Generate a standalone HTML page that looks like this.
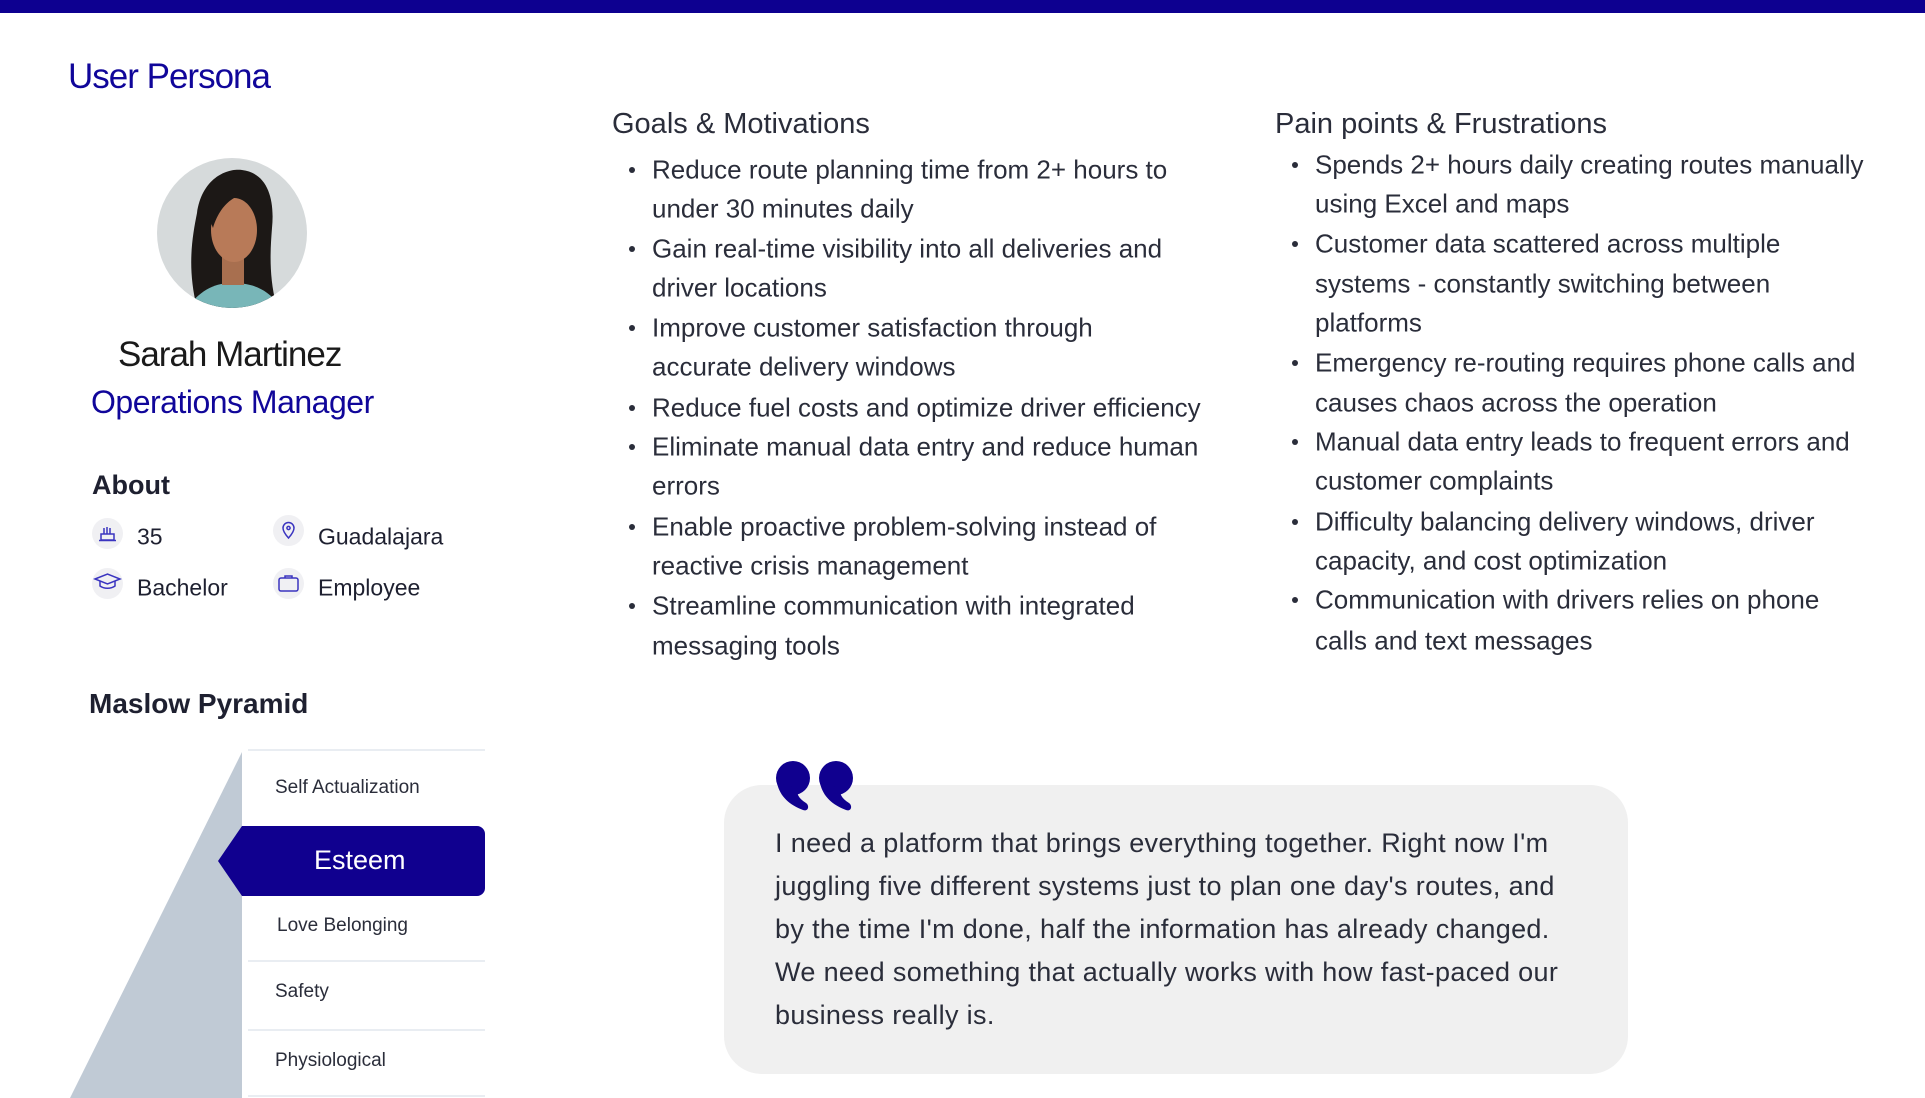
<!DOCTYPE html>
<html><head><meta charset="utf-8"><style>
*{margin:0;padding:0;box-sizing:border-box}
body{width:1925px;height:1098px;overflow:hidden;background:#fff;font-family:"Liberation Sans",sans-serif;position:relative;color:#2a2d3a}
.a{position:absolute;white-space:nowrap}
.ln{position:absolute;white-space:nowrap;font-size:26px;color:#2a2d3a;transform:translateY(-50%)}
.bu{position:absolute;width:6px;height:6px;border-radius:50%;background:#2a2d3a;transform:translateY(-50%)}
.ic{position:absolute;width:31px;height:31px;border-radius:50%;background:#f0f0f3}
.hr{position:absolute;left:248px;width:237px;height:2px;background:#e9edf2}
.it{position:absolute;white-space:nowrap;font-size:23px;color:#1e2030;transform:translateY(-50%)}
.pl{position:absolute;white-space:nowrap;font-size:19px;color:#2a2d3a;transform:translateY(-50%)}
</style></head><body>
<div class="a" style="left:0;top:0;width:1925px;height:13px;background:#0d0090"></div>
<div class="a" style="left:68px;top:57px;font-size:35px;color:#10069a;letter-spacing:-1px">User Persona</div>

<svg class="a" style="left:157px;top:158px" width="150" height="150" viewBox="0 0 150 150">
<defs><clipPath id="c"><circle cx="75" cy="75" r="75"/></clipPath></defs>
<g clip-path="url(#c)">
<rect width="150" height="150" fill="#d6dadb"/>
<path d="M40 150 C30 110 35 80 40 55 C45 20 70 10 85 12 C110 15 118 40 115 70 C113 95 112 120 120 150Z" fill="#1c1816"/>
<path d="M30 150 C45 130 60 125 75 125 C95 125 110 130 125 150Z" fill="#78b6b8"/>
<rect x="65" y="95" width="22" height="32" fill="#a86f4f"/>
<ellipse cx="77" cy="72" rx="23" ry="32" fill="#b87a58"/>
<path d="M52 60 C55 30 75 25 95 35 C85 35 65 40 56 70Z" fill="#1c1816"/>
</g></svg>

<div class="a" style="left:118px;top:335px;font-size:35px;color:#1a1a1a;letter-spacing:-1px">Sarah Martinez</div>
<div class="a" style="left:91px;top:384px;font-size:32px;color:#10069a;letter-spacing:-0.5px">Operations Manager</div>

<div class="a" style="left:92px;top:470px;font-size:27px;font-weight:bold;color:#1e2030">About</div>
<div class="ic" style="left:92px;top:518px"></div>
<div class="ic" style="left:273px;top:515px"></div>
<div class="ic" style="left:92px;top:568px"></div>
<div class="ic" style="left:273px;top:568px"></div>
<svg class="a" style="left:92px;top:518px" width="31" height="31"><g fill="none" stroke="#3a34c0" stroke-width="1.5"><rect x="9" y="16" width="13" height="6"/><line x1="7" y1="22.5" x2="24" y2="22.5"/><path d="M12 16V10M15 16V9M18 16V10"/></g></svg>
<svg class="a" style="left:273px;top:515px" width="31" height="31"><g fill="none" stroke="#3a34c0" stroke-width="1.5"><path d="M15.5 23C11 18 10 15 10 13a5.5 5.5 0 0 1 11 0c0 2-1 5-5.5 10z"/><circle cx="15.5" cy="13" r="1.6"/></g></svg>
<svg class="a" style="left:92px;top:568px" width="31" height="31"><g fill="none" stroke="#3a34c0" stroke-width="1.5"><path d="M3 11L15.5 6 28 11 15.5 16z"/><path d="M8 13v5c4 3 11 3 15 0v-5"/></g></svg>
<svg class="a" style="left:273px;top:568px" width="31" height="31"><g fill="none" stroke="#3a34c0" stroke-width="1.5"><rect x="6" y="10" width="19" height="13" rx="2"/><path d="M12 10V8h7v2"/></g></svg>
<div class="it" style="left:137px;top:537px">35</div>
<div class="it" style="left:318px;top:537px">Guadalajara</div>
<div class="it" style="left:137px;top:588px">Bachelor</div>
<div class="it" style="left:318px;top:588px">Employee</div>

<div class="a" style="left:89px;top:688px;font-size:28px;font-weight:bold;color:#1e2030">Maslow Pyramid</div>
<svg class="a" style="left:0;top:740px" width="500" height="358"><polygon points="242,12 242,358 70,358" fill="#c0cad5"/><path d="M242 86 H477 a8 8 0 0 1 8 8 V148 a8 8 0 0 1 -8 8 H242 L218 121Z" fill="#10008f"/></svg>
<div class="hr" style="top:749px"></div>
<div class="hr" style="top:960px"></div>
<div class="hr" style="top:1029px"></div>
<div class="hr" style="top:1095px"></div>
<div class="pl" style="left:275px;top:788px">Self Actualization</div>
<div class="a" style="left:314px;top:845px;font-size:27px;color:#fff">Esteem</div>
<div class="pl" style="left:277px;top:926px">Love Belonging</div>
<div class="pl" style="left:275px;top:992px">Safety</div>
<div class="pl" style="left:275px;top:1061px">Physiological</div>

<div class="a" style="left:612px;top:108px;font-size:29px;color:#2a2d3a">Goals &amp; Motivations</div>
<div class="bu" style="left:629px;top:170px"></div>
<div class="ln" style="left:652px;top:170px">Reduce route planning time from 2+ hours to</div>
<div class="ln" style="left:652px;top:209px">under 30 minutes daily</div>
<div class="bu" style="left:629px;top:249px"></div>
<div class="ln" style="left:652px;top:249px">Gain real-time visibility into all deliveries and</div>
<div class="ln" style="left:652px;top:288px">driver locations</div>
<div class="bu" style="left:629px;top:328px"></div>
<div class="ln" style="left:652px;top:328px">Improve customer satisfaction through</div>
<div class="ln" style="left:652px;top:367px">accurate delivery windows</div>
<div class="bu" style="left:629px;top:408px"></div>
<div class="ln" style="left:652px;top:408px">Reduce fuel costs and optimize driver efficiency</div>
<div class="bu" style="left:629px;top:447px"></div>
<div class="ln" style="left:652px;top:447px">Eliminate manual data entry and reduce human</div>
<div class="ln" style="left:652px;top:486px">errors</div>
<div class="bu" style="left:629px;top:527px"></div>
<div class="ln" style="left:652px;top:527px">Enable proactive problem-solving instead of</div>
<div class="ln" style="left:652px;top:566px">reactive crisis management</div>
<div class="bu" style="left:629px;top:606px"></div>
<div class="ln" style="left:652px;top:606px">Streamline communication with integrated</div>
<div class="ln" style="left:652px;top:646px">messaging tools</div>

<div class="a" style="left:1275px;top:108px;font-size:29px;color:#2a2d3a">Pain points &amp; Frustrations</div>
<div class="bu" style="left:1292px;top:165px"></div>
<div class="ln" style="left:1315px;top:165px">Spends 2+ hours daily creating routes manually</div>
<div class="ln" style="left:1315px;top:204px">using Excel and maps</div>
<div class="bu" style="left:1292px;top:244px"></div>
<div class="ln" style="left:1315px;top:244px">Customer data scattered across multiple</div>
<div class="ln" style="left:1315px;top:284px">systems - constantly switching between</div>
<div class="ln" style="left:1315px;top:323px">platforms</div>
<div class="bu" style="left:1292px;top:363px"></div>
<div class="ln" style="left:1315px;top:363px">Emergency re-routing requires phone calls and</div>
<div class="ln" style="left:1315px;top:403px">causes chaos across the operation</div>
<div class="bu" style="left:1292px;top:442px"></div>
<div class="ln" style="left:1315px;top:442px">Manual data entry leads to frequent errors and</div>
<div class="ln" style="left:1315px;top:481px">customer complaints</div>
<div class="bu" style="left:1292px;top:522px"></div>
<div class="ln" style="left:1315px;top:522px">Difficulty balancing delivery windows, driver</div>
<div class="ln" style="left:1315px;top:561px">capacity, and cost optimization</div>
<div class="bu" style="left:1292px;top:600px"></div>
<div class="ln" style="left:1315px;top:600px">Communication with drivers relies on phone</div>
<div class="ln" style="left:1315px;top:641px">calls and text messages</div>

<div class="a" style="left:724px;top:785px;width:904px;height:289px;background:#f0f0f0;border-radius:38px"></div>
<svg class="a" style="left:770px;top:755px" width="90" height="60"><g fill="#10008f"><circle cx="23" cy="23" r="17"/><path d="M7 28 C10 42 20 50 33 55 C38 57 40 51 36 48 C28 43 26 38 28 33Z"/><circle cx="66" cy="23" r="17"/><path d="M50 28 C53 42 63 50 76 55 C81 57 83 51 79 48 C71 43 69 38 71 33Z"/></g></svg>
<div class="a" style="left:775px;top:822px;font-size:27px;letter-spacing:0.35px;line-height:43px;color:#2a2d3a">I need a platform that brings everything together. Right now I'm<br>juggling five different systems just to plan one day's routes, and<br>by the time I'm done, half the information has already changed.<br>We need something that actually works with how fast-paced our<br>business really is.</div>
</body></html>
